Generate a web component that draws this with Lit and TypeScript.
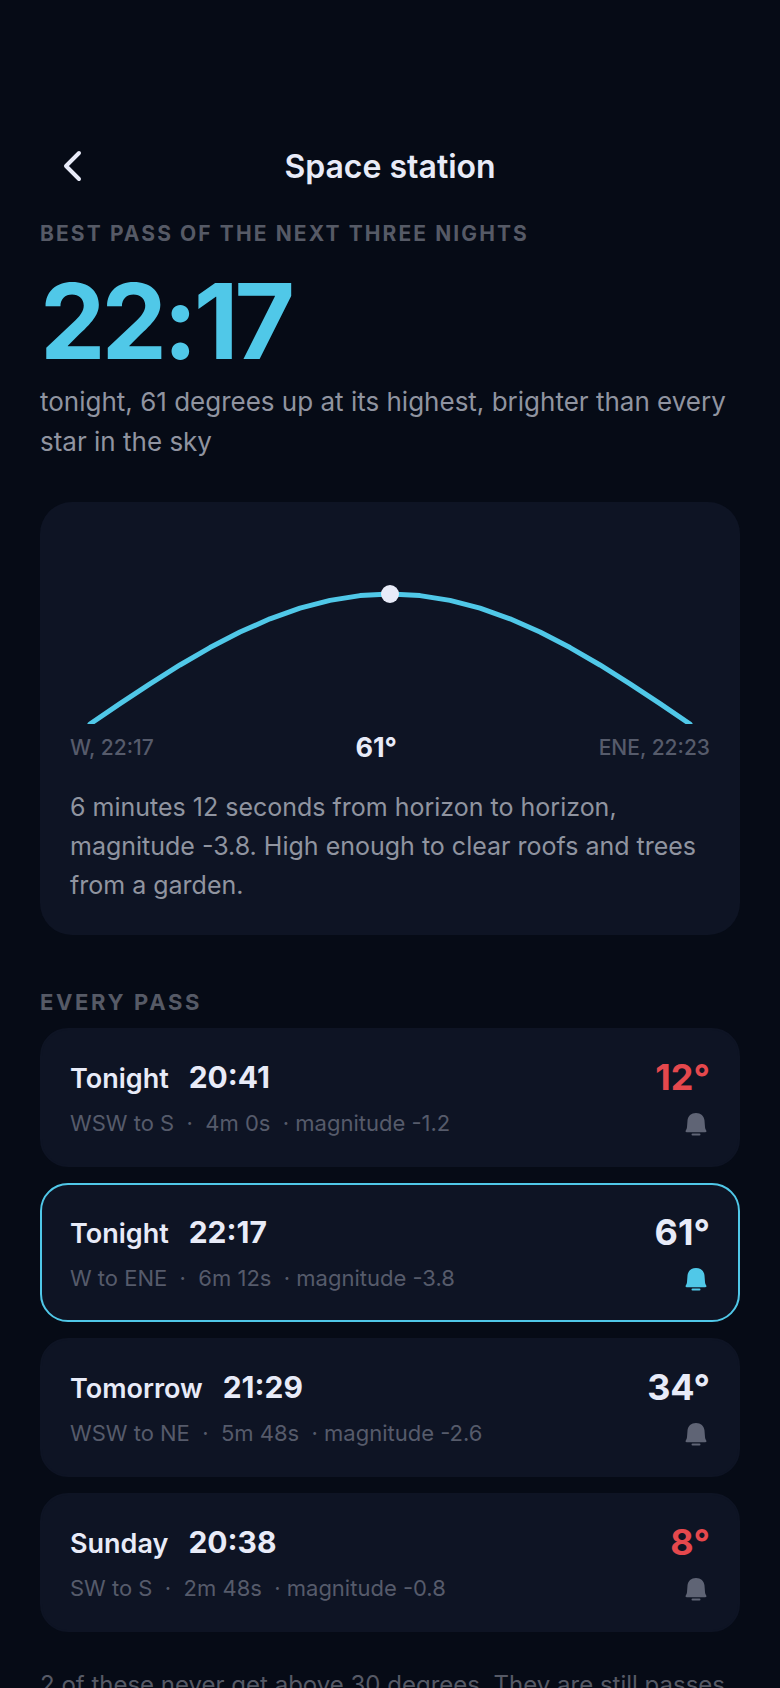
import { LitElement, html, css, svg } from "lit";
import { customElement, property } from "lit/decorators.js";
import { classMap } from "lit/directives/class-map.js";

interface Pass {
  day: string;
  time: string;
  from: string;
  to: string;
  duration: string;
  magnitude: string;
  altitude: number;
  alert: boolean;
}

const PASSES: Pass[] = [
  { day: "Tonight", time: "20:41", from: "WSW", to: "S", duration: "4m 0s", magnitude: "-1.2", altitude: 12, alert: false },
  { day: "Tonight", time: "22:17", from: "W", to: "ENE", duration: "6m 12s", magnitude: "-3.8", altitude: 61, alert: true },
  { day: "Tomorrow", time: "21:29", from: "WSW", to: "NE", duration: "5m 48s", magnitude: "-2.6", altitude: 34, alert: false },
  { day: "Sunday", time: "20:38", from: "SW", to: "S", duration: "2m 48s", magnitude: "-0.8", altitude: 8, alert: false },
];

/* Chart units: the horizon is the bottom edge, the zenith the top edge. */
const HORIZON = 192;

@customElement("sky-arc")
class SkyArc extends LitElement {
  @property({ type: Number }) altitude = 0;

  static styles = css`
    :host {
      display: block;
    }
    .chart {
      display: block;
      width: 100%;
      height: auto;
    }
    .track {
      fill: none;
      stroke: #50c8e8;
      stroke-width: 5;
      stroke-linecap: round;
      stroke-linejoin: round;
    }
    .peak {
      fill: #e8ebf8;
    }
  `;

  render() {
    const rise = Math.round((this.altitude / 90) * HORIZON);
    const steps = 20;
    const points = Array.from({ length: steps + 1 }, (_, i) => {
      const t = i / steps;
      return `${20 + t * 600},${HORIZON - Math.sin(t * Math.PI) * rise}`;
    }).join(" ");
    return html`
      <svg class="chart" viewBox="0 0 640 192" role="img" aria-label="Path across the sky">
        ${svg`<polyline class="track" points=${points}></polyline>
        <circle class="peak" cx="320" cy=${HORIZON - rise} r="9"></circle>`}
      </svg>
    `;
  }
}

@customElement("pass-row")
class PassRow extends LitElement {
  @property({ attribute: false }) pass!: Pass;

  static styles = css`
    :host {
      display: block;
    }
    .row {
      display: flex;
      justify-content: space-between;
      box-sizing: border-box;
      padding: 26px 28px;
      border: 2px solid #0e1424;
      border-radius: 28px;
      background: #0e1424;
    }
    .row.chosen {
      border-color: #50c8e8;
    }
    .when {
      display: flex;
      align-items: baseline;
      gap: 20px;
      line-height: 42px;
      font-size: 27px;
      font-weight: 600;
    }
    .time {
      font-size: 30px;
      font-weight: 700;
    }
    .detail {
      margin: 7px 0 0;
      font-size: 22px;
      line-height: 32px;
      color: #565b6b;
      white-space: pre-wrap;
    }
    .side {
      display: flex;
      flex-direction: column;
      align-items: flex-end;
    }
    .altitude {
      font-size: 36px;
      line-height: 42px;
      font-weight: 700;
    }
    .altitude.low {
      color: #e5484d;
    }
    .bell {
      display: flex;
      margin-top: 12px;
      padding: 0;
      border: 0;
      background: none;
      color: #5f6475;
      cursor: pointer;
    }
    .bell.on {
      color: #50c8e8;
    }
    .bell svg {
      display: block;
      width: 28px;
      height: 28px;
    }
  `;

  render() {
    const p = this.pass;
    return html`
      <div class=${classMap({ row: true, chosen: p.alert })}>
        <div>
          <div class="when"><span>${p.day}</span><span class="time">${p.time}</span></div>
          <p class="detail">${`${p.from} to ${p.to}  ·  ${p.duration}  · magnitude ${p.magnitude}`}</p>
        </div>
        <div class="side">
          <span class=${classMap({ altitude: true, low: p.altitude < 30 })}>${p.altitude}°</span>
          <button
            class=${classMap({ bell: true, on: p.alert })}
            aria-label="Remind me"
            aria-pressed=${p.alert ? "true" : "false"}
          >
            <svg viewBox="0 0 28 28" fill="currentColor" aria-hidden="true">
              <path d="M14 3C9.200 3 5.900 6.100 5.500 10.500L5 17C4.900 18.400 4.500 19.200 3.900 20.300C3.200 21.500 3.600 22.200 4.700 22.200H23.300C24.400 22.200 24.800 21.500 24.100 20.300C23.500 19.200 23.100 18.400 23 17L22.500 10.500C22.100 6.100 18.800 3 14 3Z" />
              <rect x="9.500" y="23.600" width="9" height="2" rx="1" />
            </svg>
          </button>
        </div>
      </div>
    `;
  }
}

@customElement("app-root")
class AppRoot extends LitElement {
  static styles = css`
    :host {
      display: block;
      min-height: 100vh;
      box-sizing: border-box;
      overflow: hidden;
      background: #060b16;
      color: #e8ebf8;
      font-family: Inter, "Liberation Sans", sans-serif;
    }
    .page {
      padding: 122px 40px 40px;
    }
    .bar {
      display: grid;
      grid-template-columns: 88px 1fr 88px;
      align-items: center;
      height: 88px;
    }
    .back {
      display: flex;
      align-items: center;
      justify-content: center;
      width: 64px;
      height: 88px;
      padding: 0;
      border: 0;
      background: none;
      color: inherit;
      cursor: pointer;
    }
    .back svg {
      display: block;
      width: 36px;
      height: 36px;
    }
    .title {
      margin: 0;
      padding-top: 2px;
      text-align: center;
      font-size: 32px;
      line-height: 40px;
      font-weight: 600;
    }
    .label {
      margin: 0;
      font-size: 21px;
      line-height: 28px;
      font-weight: 700;
      letter-spacing: 0.1em;
      text-transform: uppercase;
      color: #565a66;
    }
    .best {
      padding-top: 10px;
    }
    .hour {
      margin: 12px 0 0;
      font-size: 104px;
      line-height: 122px;
      font-weight: 700;
      letter-spacing: -4px;
      color: #50c8e8;
    }
    .lead,
    .text {
      margin: 0;
      color: #9094a0;
    }
    .lead {
      font-size: 26px;
      line-height: 40px;
    }
    .text {
      font-size: 25px;
      line-height: 39px;
    }
    .card {
      margin-top: 40px;
      padding: 30px;
      border-radius: 32px;
      background: #0e1424;
    }
    .ends {
      display: flex;
      align-items: center;
      justify-content: space-between;
      margin: 8px 0 24px;
      font-size: 21px;
      line-height: 32px;
      font-weight: 500;
      color: #565b6b;
    }
    .top {
      font-size: 27px;
      font-weight: 700;
      color: #e8ebf8;
    }
    .every {
      margin-top: 53px;
      font-size: 22px;
      letter-spacing: 0.12em;
    }
    .list {
      display: flex;
      flex-direction: column;
      gap: 16px;
      margin: 12px 0 0;
      padding: 0;
      list-style: none;
    }
    .note {
      margin: 34px 0 0;
      font-size: 24px;
      line-height: 38px;
      color: #565a66;
    }
  `;

  render() {
    return html`
      <main class="page">
        <header class="bar">
          <button class="back" aria-label="Back">
            <svg viewBox="0 0 36 36" fill="none" stroke="currentColor" stroke-width="4" stroke-linecap="round" stroke-linejoin="round" aria-hidden="true">
              <path d="M25 5L12 18L25 31" />
            </svg>
          </button>
          <h1 class="title">Space station</h1>
        </header>

        <section class="best">
          <h2 class="label">Best pass of the next three nights</h2>
          <p class="hour">22:17</p>
          <p class="lead">tonight, 61 degrees up at its highest, brighter than every star in the sky</p>
        </section>

        <section class="card">
          <sky-arc altitude="61"></sky-arc>
          <div class="ends">
            <span>W, 22:17</span>
            <span class="top">61°</span>
            <span>ENE, 22:23</span>
          </div>
          <p class="text">
            6 minutes 12 seconds from horizon to horizon, magnitude -3.8. High enough to clear roofs and trees from a garden.
          </p>
        </section>

        <h2 class="label every">Every pass</h2>
        <ul class="list">
          ${PASSES.map((pass) => html`<li><pass-row .pass=${pass}></pass-row></li>`)}
        </ul>
        <p class="note">2 of these never get above 30 degrees. They are still passes</p>
      </main>
    `;
  }
}
